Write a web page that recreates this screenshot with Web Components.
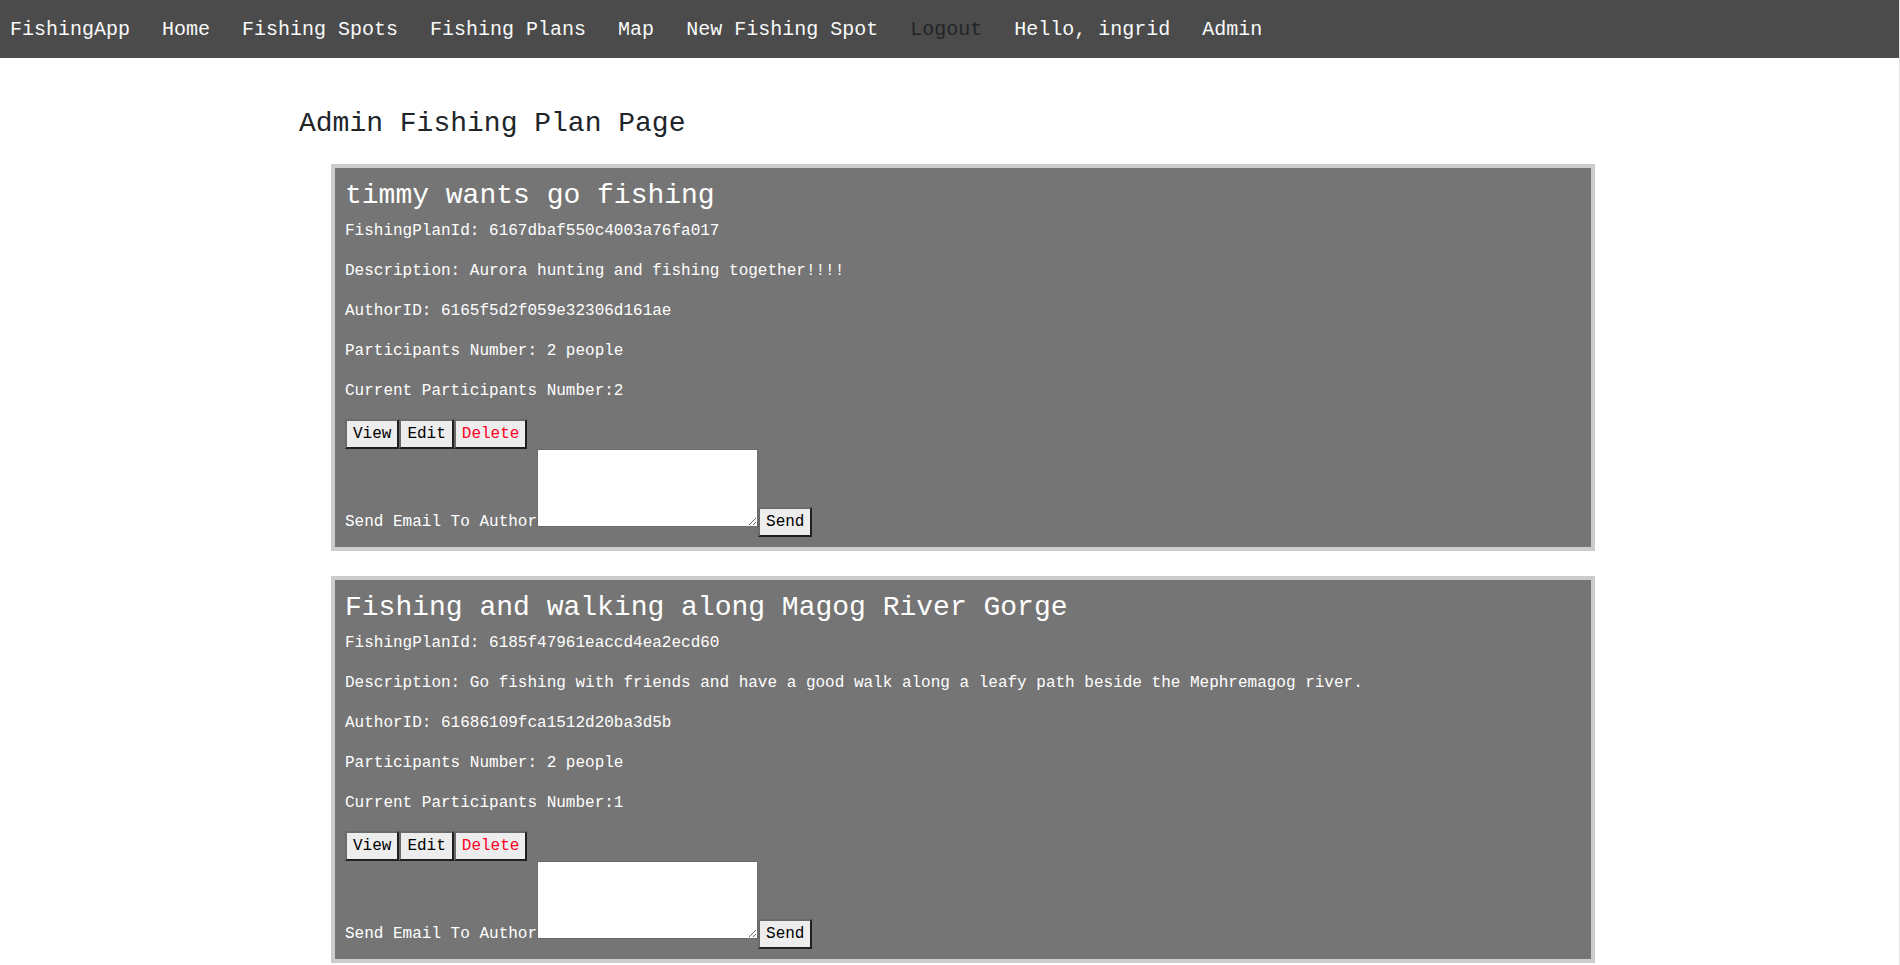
<!DOCTYPE html>
<html lang="en">
<head>
<meta charset="utf-8">
<meta name="viewport" content="width=device-width, initial-scale=1">
<title>FishingApp</title>
<style>
  html { background: #fff; }
  body {
    margin: 0;
    border-right: 1px solid #e4e4e4;
    min-height: 100vh;
    box-sizing: border-box;
    font: 16px/24px "Liberation Mono", "Courier New", monospace;
    color: #212529;
  }
</style>
</head>
<body>
<site-nav>
  <nav-link href="#app">FishingApp</nav-link>
  <nav-link href="#home">Home</nav-link>
  <nav-link href="#spots">Fishing Spots</nav-link>
  <nav-link href="#plans">Fishing Plans</nav-link>
  <nav-link href="#map">Map</nav-link>
  <nav-link href="#new">New Fishing Spot</nav-link>
  <nav-link href="#logout" muted>Logout</nav-link>
  <nav-link href="#profile">Hello, ingrid</nav-link>
  <nav-link href="#admin">Admin</nav-link>
</site-nav>
<admin-page>
  <span slot="title">Admin Fishing Plan Page</span>
  <plan-card>
    <span slot="title">timmy wants go fishing</span>
    <plan-field>FishingPlanId: 6167dbaf550c4003a76fa017</plan-field>
    <plan-field>Description: Aurora hunting and fishing together!!!!</plan-field>
    <plan-field>AuthorID: 6165f5d2f059e32306d161ae</plan-field>
    <plan-field>Participants Number: 2 people</plan-field>
    <plan-field>Current Participants Number:2</plan-field>
  </plan-card>
  <plan-card>
    <span slot="title">Fishing and walking along Magog River Gorge</span>
    <plan-field>FishingPlanId: 6185f47961eaccd4ea2ecd60</plan-field>
    <plan-field>Description: Go fishing with friends and have a good walk along a leafy path beside the Mephremagog river.</plan-field>
    <plan-field>AuthorID: 61686109fca1512d20ba3d5b</plan-field>
    <plan-field>Participants Number: 2 people</plan-field>
    <plan-field>Current Participants Number:1</plan-field>
  </plan-card>
</admin-page>
<script>
  class BaseElement extends HTMLElement {
    constructor() {
      super();
      this.attachShadow({ mode: 'open' }).innerHTML = this.constructor.markup;
    }
  }

  customElements.define('site-nav', class extends BaseElement {
    static markup = `
      <style>
        :host { display: block; background: #4b4b4b; font-size: 20px; line-height: 30px; }
        nav { display: flex; flex-wrap: wrap; gap: 0 32px; padding: 15px 10px 13px; }
      </style>
      <nav><slot></slot></nav>`;
  });

  customElements.define('nav-link', class extends BaseElement {
    static markup = `
      <style>
        :host { display: block; color: #f8f9fa; }
        :host([muted]) { color: #212529; }
        a { color: inherit; text-decoration: none; }
      </style>
      <a><slot></slot></a>`;
    connectedCallback() {
      this.shadowRoot.querySelector('a').setAttribute('href', this.getAttribute('href'));
    }
  });

  customElements.define('admin-page', class extends BaseElement {
    static markup = `
      <style>
        :host { display: block; padding: 48px 5px 0 0; }
        main { max-width: 1296px; margin: 0 auto; }
        h1 { margin: 0 0 22px; font-size: 28px; line-height: 36px; font-weight: 400; }
        section { display: flex; flex-direction: column; gap: 25px; padding-left: 32px; }
      </style>
      <main>
        <h1><slot name="title"></slot></h1>
        <section><slot></slot></section>
      </main>`;
  });

  customElements.define('plan-field', class extends BaseElement {
    static markup = `
      <style>
        :host { display: block; }
        p { margin: 0 0 16px; }
      </style>
      <p><slot></slot></p>`;
  });

  customElements.define('plan-button', class extends BaseElement {
    static markup = `
      <style>
        :host { display: block; color: #000; }
        :host([danger]) { color: #fb0024; }
        button {
          display: block; margin: 0; padding: 1px 6px;
          border: 2px solid; border-color: #6b6b6b #1f1f1f #1f1f1f #6b6b6b; border-radius: 0;
          background: #ededed; color: inherit; font: inherit;
        }
      </style>
      <button type="button"><slot></slot></button>`;
  });

  customElements.define('plan-card', class extends BaseElement {
    static markup = `
      <style>
        :host { display: block; padding: 10px; border: 4px solid #ccc; background: #757575; color: #fff; }
        h2 { margin: 0 0 5px; font-size: 28px; line-height: 36px; font-weight: 400; }
        .actions { display: flex; }
        form { display: flex; align-items: flex-end; margin: 0; }
        label { padding-bottom: 3px; }
        textarea {
          box-sizing: border-box; width: 221px; height: 78px; margin: 0 0 10px; padding: 2px;
          border: 1px solid #6b6b6b; border-radius: 0; background: #fff; color: #000; font: inherit;
          resize: both; overflow: auto; outline: 0;
        }
      </style>
      <h2><slot name="title"></slot></h2>
      <slot></slot>
      <div class="actions">
        <plan-button>View</plan-button>
        <plan-button>Edit</plan-button>
        <plan-button danger>Delete</plan-button>
      </div>
      <form>
        <label for="email">Send Email To Author</label>
        <textarea id="email"></textarea>
        <plan-button>Send</plan-button>
      </form>`;
  });
</script>
</body>
</html>
